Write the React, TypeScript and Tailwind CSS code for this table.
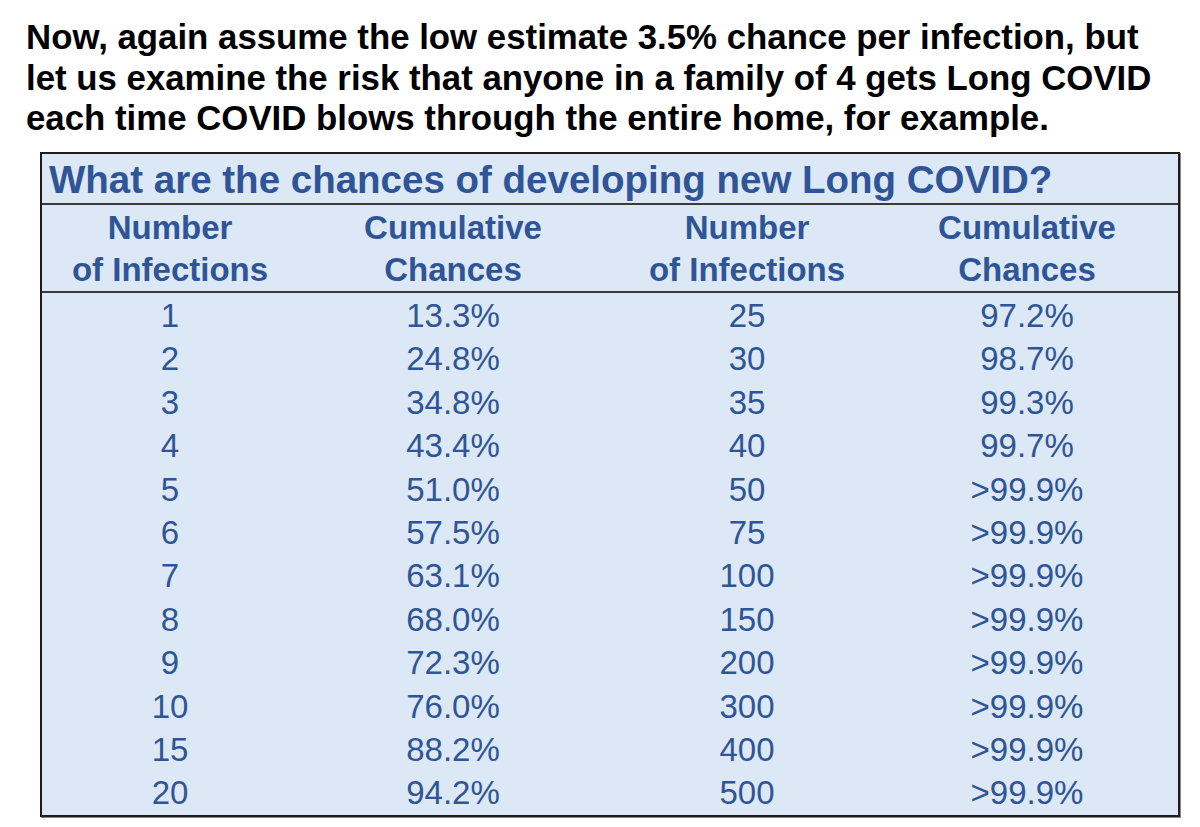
import React from "react";

const rows: [string, string, string, string][] = [
  ["1", "13.3%", "25", "97.2%"],
  ["2", "24.8%", "30", "98.7%"],
  ["3", "34.8%", "35", "99.3%"],
  ["4", "43.4%", "40", "99.7%"],
  ["5", "51.0%", "50", ">99.9%"],
  ["6", "57.5%", "75", ">99.9%"],
  ["7", "63.1%", "100", ">99.9%"],
  ["8", "68.0%", "150", ">99.9%"],
  ["9", "72.3%", "200", ">99.9%"],
  ["10", "76.0%", "300", ">99.9%"],
  ["15", "88.2%", "400", ">99.9%"],
  ["20", "94.2%", "500", ">99.9%"],
];

const headers: [string, string][] = [
  ["Number", "of Infections"],
  ["Cumulative", "Chances"],
  ["Number", "of Infections"],
  ["Cumulative", "Chances"],
];

export default function App() {
  return (
    <div
      className="w-[1200px] h-[827px] bg-white overflow-hidden"
      style={{ fontFamily: '"Liberation Sans", Arial, sans-serif' }}
    >
      <div className="pl-[26px] pt-[17px] text-[34.8px] leading-[40.5px] font-bold text-black whitespace-nowrap">
        <div>Now, again assume the low estimate 3.5% chance per infection, but</div>
        <div>let us examine the risk that anyone in a family of 4 gets Long COVID</div>
        <div>each time COVID blows through the entire home, for example.</div>
      </div>

      <div className="ml-[40px] mt-[13.5px] w-[1140px] border-2 border-[#1c1c1c] bg-[#dce8f5] shadow-[1px_1px_0_#8a8a8a] text-[#2f5597]">
        <div className="h-[51px] pt-[5px] pl-[7px] text-[38.5px] leading-[42px] font-bold whitespace-nowrap border-b-2 border-[#3a3a3a]">
          What are the chances of developing new Long COVID?
        </div>
        <div className="h-[88px] pt-[2px] grid grid-cols-[256px_310px_278px_282px] border-b-2 border-[#3a3a3a] font-bold text-[33px] leading-[42px]">
          {headers.map(([a, b], i) => (
            <div key={i} className="flex flex-col items-center whitespace-nowrap">
              <span>{a}</span>
              <span>{b}</span>
            </div>
          ))}
        </div>
        <div className="flex flex-col text-[33px] pt-[1px]">
          {rows.map((r, i) => (
            <div key={i} className="grid grid-cols-[256px_310px_278px_282px] h-[43.4px] leading-[43.4px]">
              {r.map((c, j) => (
                <div key={j} className="text-center whitespace-nowrap">
                  {c}
                </div>
              ))}
            </div>
          ))}
        </div>
      </div>
    </div>
  );
}
